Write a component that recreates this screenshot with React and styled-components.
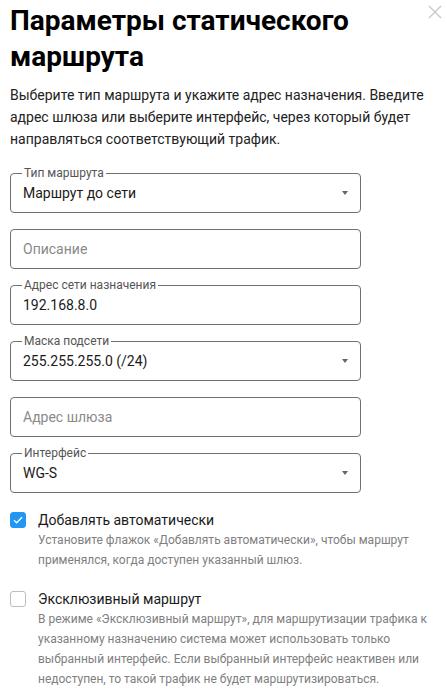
import styled, { createGlobalStyle } from "styled-components";

const GlobalStyle = createGlobalStyle`
  body {
    margin: 0;
    background: #fff;
    font-family: Roboto, "Noto Sans", Arial, sans-serif;
  }
`

const Page = styled.div`
  width: 427px;
  padding: 0 10px;
`
const Header = styled.div`
  display: flex;
  align-items: flex-start;
  justify-content: space-between;
`
const Title = styled.h1`
  margin: 3px 0 0;
  font-size: 28px;
  line-height: 36px;
  font-weight: 700;
  color: #000;
  max-width: 400px;
`
const CloseButton = styled.button`
  border: none;
  background: none;
  padding: 0;
  margin: 5px -5px 0 0;
  width: 14px;
  height: 14px;
  display: flex;
  cursor: pointer;
`
const Intro = styled.p`
  margin: 9px 0 0;
  font-size: 14px;
  line-height: 22px;
  color: #222;
`
const Fields = styled.div`
  display: flex;
  flex-direction: column;
  gap: 16px;
  margin-top: 23px;
  width: 351px;
`
const Field = styled.div`
  position: relative;
  height: 40px;
  box-sizing: border-box;
  border: 1px solid #707070;
  border-radius: 4px;
  display: flex;
  align-items: center;
  padding: 0 12px 0 12px;
`
const FieldLabel = styled.span`
  position: absolute;
  top: -8px;
  left: 11px;
  padding: 0 2px;
  background: #fff;
  font-size: 12px;
  line-height: 14px;
  color: #555;
`
const Value = styled.span`
  flex: 1;
  font-size: 14px;
  color: ${(p) => (p.placeholder ? "#8a8a8a" : "#1a1a1a")};
`
const Arrow = styled.span`
  width: 0;
  height: 0;
  border-left: 3.5px solid transparent;
  border-right: 3.5px solid transparent;
  border-top: 4px solid #666;
`
const Options = styled.div`
  display: flex;
  flex-direction: column;
  gap: 19px;
  margin-top: 17px;
`
const Option = styled.label`
  display: grid;
  grid-template-columns: 16px 1fr;
  column-gap: 12px;
`
const Box = styled.span`
  width: 16px;
  height: 16px;
  box-sizing: border-box;
  margin-top: 2px;
  border-radius: 3px;
  border: 1px solid ${(p) => (p.checked ? "#2196f3" : "#bdbdbd")};
  background: ${(p) => (p.checked ? "#2196f3" : "#fff")};
  display: flex;
  align-items: center;
  justify-content: center;
`
const OptionText = styled.div`
  display: flex;
  flex-direction: column;
`
const OptionTitle = styled.span`
  font-size: 14px;
  line-height: 20px;
  color: #1a1a1a;
`
const OptionHint = styled.span`
  font-size: 12px;
  line-height: 20px;
  color: #808080;
`

const fields = [
  { label: "Тип маршрута", value: "Маршрут до сети", select: true },
  { placeholder: "Описание" },
  { label: "Адрес сети назначения", value: "192.168.8.0" },
  { label: "Маска подсети", value: "255.255.255.0 (/24)", select: true },
  { placeholder: "Адрес шлюза" },
  { label: "Интерфейс", value: "WG-S", select: true },
]

const options = [
  {
    title: "Добавлять автоматически",
    hint: "Установите флажок «Добавлять автоматически», чтобы маршрут применялся, когда доступен указанный шлюз.",
    checked: true,
  },
  {
    title: "Эксклюзивный маршрут",
    hint: "В режиме «Эксклюзивный маршрут», для маршрутизации трафика к указанному назначению система может использовать только выбранный интерфейс. Если выбранный интерфейс неактивен или недоступен, то такой трафик не будет маршрутизироваться.",
    checked: false,
  },
]

export default function App() {
  return (
    <Page>
      <GlobalStyle />
      <Header>
        <Title>Параметры статического маршрута</Title>
        <CloseButton aria-label="Закрыть">
          <svg width="14" height="14" viewBox="0 0 14 14">
            <path d="M1 1L13 13M13 1L1 13" stroke="#c8c8c8" strokeWidth="1.4" />
          </svg>
        </CloseButton>
      </Header>
      <Intro>
        Выберите тип маршрута и укажите адрес назначения. Введите адрес шлюза или
        выберите интерфейс, через который будет направляться соответствующий трафик.
      </Intro>
      <Fields>
        {fields.map((f, i) => (
          <Field key={i}>
            {f.label && <FieldLabel>{f.label}</FieldLabel>}
            <Value placeholder={f.placeholder ? 1 : undefined}>{f.value || f.placeholder}</Value>
            {f.select && <Arrow />}
          </Field>
        ))}
      </Fields>
      <Options>
        {options.map((o) => (
          <Option key={o.title}>
            <Box checked={o.checked}>
              {o.checked && (
                <svg width="10" height="8" viewBox="0 0 10 8">
                  <path d="M1 4.2L3.7 6.8L9 1.2" fill="none" stroke="#fff" strokeWidth="1.3" />
                </svg>
              )}
            </Box>
            <OptionText>
              <OptionTitle>{o.title}</OptionTitle>
              <OptionHint>{o.hint}</OptionHint>
            </OptionText>
          </Option>
        ))}
      </Options>
    </Page>
  );
}
